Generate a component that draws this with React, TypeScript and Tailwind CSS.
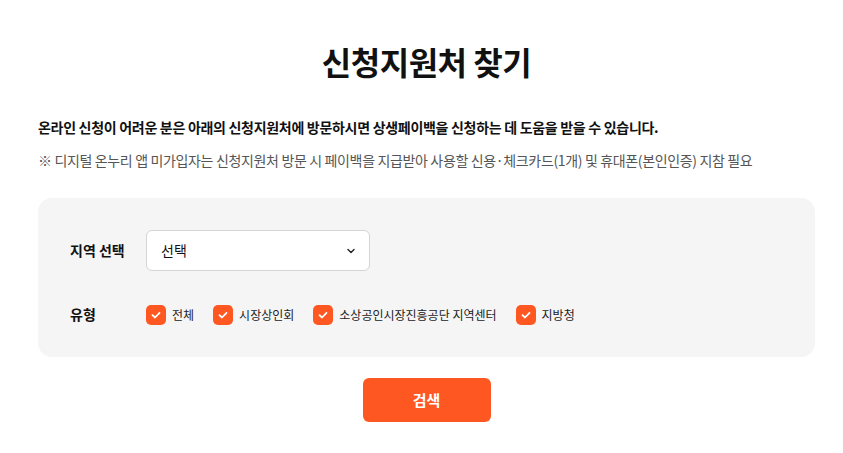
import React from 'react';

const types = ['전체', '시장상인회', '소상공인시장진흥공단 지역센터', '지방청'];

const CheckIcon = () => (
  <span className="w-5 h-5 rounded-[5px] bg-[#ff5722] flex items-center justify-center shrink-0">
    <svg width="12" height="12" viewBox="0 0 12 12" fill="none">
      <path d="M2.5 6.2 L5 8.5 L9.5 3.8" stroke="white" strokeWidth="1.8" strokeLinecap="round" strokeLinejoin="round" />
    </svg>
  </span>
);

export default function App() {
  return (
    <div
      className="w-[843px] h-[453px] bg-white pl-[38px] pr-[28px] pt-[37px] text-[#111]"
      style={{ fontFamily: '"Noto Sans CJK KR", "Noto Sans", sans-serif' }}
    >
      {/* Title */}
      <h1 className="text-center text-[32px] font-bold leading-[48px] tracking-[-0.5px]">신청지원처 찾기</h1>

      {/* Notice */}
      <p className="mt-[31px] text-[14px] font-bold leading-[22px] tracking-[-0.3px]">
        온라인 신청이 어려운 분은 아래의 신청지원처에 방문하시면 상생페이백을 신청하는 데 도움을 받을 수 있습니다.
      </p>
      <p className="mt-[11px] text-[14px] leading-[22px] text-[#555] tracking-[-0.35px]">
        ※ 디지털 온누리 앱 미가입자는 신청지원처 방문 시 페이백을 지급받아 사용할 신용·체크카드(1개) 및 휴대폰(본인인증) 지참 필요
      </p>

      {/* Filter panel */}
      <div className="mt-[27px] bg-[#f5f5f5] rounded-[14px] px-[32px] pt-[32px] pb-[32px]">
        <div className="flex items-center">
          <span className="w-[76px] text-[14px] font-bold">지역 선택</span>
          <div className="w-[224px] h-[41px] bg-white border border-[#d4d4d8] rounded-[6px] flex items-center justify-between pl-[14px] pr-[12px]">
            <span className="text-[14px]">선택</span>
            <svg width="12" height="12" viewBox="0 0 12 12" fill="none">
              <path d="M3 4.5 L6 7.5 L9 4.5" stroke="#222" strokeWidth="1.4" strokeLinecap="round" strokeLinejoin="round" />
            </svg>
          </div>
        </div>
        <div className="flex items-center mt-[33px]">
          <span className="w-[76px] text-[14px] font-bold">유형</span>
          <div className="flex items-center gap-[19px]">
            {types.map((t) => (
              <label key={t} className="flex items-center gap-[6px]">
                <CheckIcon />
                <span className="text-[12px] text-[#222]">{t}</span>
              </label>
            ))}
          </div>
        </div>
      </div>

      {/* Search button */}
      <div className="flex justify-center mt-[21px]">
        <button className="w-[128px] h-[44px] bg-[#ff5722] rounded-[6px] text-white text-[15px] font-bold">
          검색
        </button>
      </div>
    </div>
  );
}
